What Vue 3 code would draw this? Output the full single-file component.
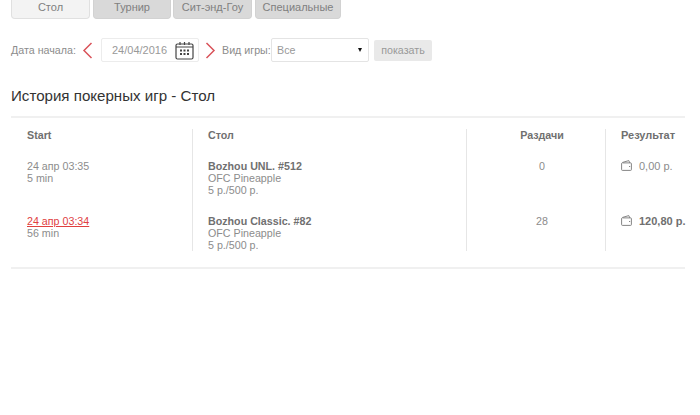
<script setup>
const tabs = [
  { name: 'Стол', active: true },
  { name: 'Турнир' },
  { name: 'Сит-энд-Гоу' },
  { name: 'Специальные' }
]
const rows = [
  { start: '24 апр 03:35', dur: '5 min', table: 'Bozhou UNL. #512', hands: '0', result: '0,00 р.' },
  { start: '24 апр 03:34', dur: '56 min', table: 'Bozhou Classic. #82', hands: '28', result: '120,80 р.', win: true }
]
</script>

<template>
  <div class="page">
    <nav class="tabs">
      <div v-for="t in tabs" :key="t.name" class="tab" :class="{ active: t.active }">{{ t.name }}</div>
    </nav>

    <div class="filters">
      <span class="label">Дата начала:</span>
      <svg class="arrow" width="11" height="17" viewBox="0 0 11 17"><path d="M9.500 1 L2 8.500 L9.500 16" fill="none" stroke="#d9535a" stroke-width="1.500"/></svg>
      <div class="date">
        <span>24/04/2016</span>
        <svg width="19" height="19" viewBox="0 0 19 19" class="cal">
          <rect x="1" y="3" width="17" height="15" rx="1.500" fill="none" stroke="#444" stroke-width="1.200"/>
          <path d="M1 6h17" stroke="#444" stroke-width="1"/>
          <path d="M5 1v3M9.500 1v3M14 1v3" stroke="#444" stroke-width="1.200"/>
          <path d="M5 8.500h2v2h-2zM8.500 8.500h2v2h-2zM12 8.500h2v2h-2zM5 12h2v2h-2zM8.500 12h2v2h-2zM12 12h2v2h-2z" fill="#444"/>
        </svg>
      </div>
      <svg class="arrow next" width="11" height="17" viewBox="0 0 11 17"><path d="M1.500 1 L9 8.500 L1.500 16" fill="none" stroke="#d9535a" stroke-width="1.500"/></svg>
      <span class="label game">Вид игры:</span>
      <div class="select"><span>Все</span><i class="caret"></i></div>
      <div class="show">показать</div>
    </div>

    <h1 class="title">История покерных игр - Стол</h1>

    <section class="history">
      <div class="col col-start">
        <div class="head">Start</div>
        <div v-for="r in rows" :key="r.start" class="cell">
          <a v-if="r.win" class="link">{{ r.start }}</a>
          <div v-else>{{ r.start }}</div>
          <div>{{ r.dur }}</div>
        </div>
      </div>
      <div class="col col-table">
        <div class="head">Стол</div>
        <div v-for="r in rows" :key="r.table" class="cell">
          <b>{{ r.table }}</b>
          <div>OFC Pineapple</div>
          <div>5 р./500 р.</div>
        </div>
      </div>
      <div class="col col-hands">
        <div class="head">Раздачи</div>
        <div v-for="r in rows" :key="r.table" class="cell">{{ r.hands }}</div>
      </div>
      <div class="col col-result">
        <div class="head">Результат</div>
        <div v-for="r in rows" :key="r.table" class="cell res" :class="{ win: r.win }">
          <svg width="11" height="11" viewBox="0 0 11 11"><path d="M.6 3.800 Q.6 2.900 1.600 2.400 L7.800 .6 L8.800 2.900 M1.600 2.900 H9.600 Q10.400 2.900 10.400 3.700 V9.600 Q10.400 10.400 9.600 10.400 H1.400 Q.6 10.400 .6 9.600 V3.800 M8 6.500 H9.200" fill="none" stroke="#777" stroke-width=".9"/></svg>
          <span>{{ r.result }}</span>
        </div>
      </div>
    </section>
  </div>
</template>

<style>
body { margin: 0; background: #fff; }
</style>

<style scoped>
.page {
  width: 700px;
  height: 415px;
  overflow: hidden;
  font-family: "Liberation Sans", Arial, sans-serif;
  font-size: 10.700px;
  line-height: 12px;
  color: #8c8c8c;
  background: #fff;
}
.tabs {
  display: flex;
  gap: 2px;
  padding-left: 11px;
  height: 19px;
}
.tab {
  width: 78px;
  height: 19px;
  box-sizing: border-box;
  padding-top: 1px;
  text-align: center;
  background: #d9d9d9;
  border: 1px solid #d2d2d2;
  border-top: 0;
  border-radius: 0 0 4px 4px;
  color: #808080;
  font-size: 11px;
  line-height: 12px;
}
.tab.active { background: #f3f3f3; border-color: #e0e0e0; width: 79px; margin-right: 1px; }
.tab:nth-child(3) { width: 79px; margin-right: 1px; }
.tab:nth-child(4) { width: 86px; }
.filters {
  display: flex;
  align-items: center;
  height: 24px;
  margin-top: 19px;
  padding-left: 11px;
}
.label { width: 66px; white-space: nowrap; }
.arrow { margin-left: 5px; }
.date {
  margin-left: 8px;
  width: 98px;
  height: 24px;
  box-sizing: border-box;
  border: 1px solid #ececec;
  border-radius: 2px;
  display: flex;
  align-items: center;
  padding-left: 10px;
  color: #999;
  font-size: 11px;
}
.cal { margin-left: 8px; }
.next { margin-left: 6px; }
.game { margin-left: 6px; width: 49px; }
.select {
  width: 98px;
  height: 24px;
  box-sizing: border-box;
  border: 1px solid #e4e4e4;
  border-radius: 2px;
  display: flex;
  align-items: center;
  justify-content: space-between;
  padding: 0 6px 0 5px;
  color: #999;
}
.caret {
  width: 0;
  height: 0;
  border-left: 2.500px solid transparent;
  border-right: 2.500px solid transparent;
  border-top: 4px solid #111;
}
.show {
  margin-left: 5px;
  width: 58px;
  height: 21px;
  background: #e9e9e9;
  border-radius: 2px;
  text-align: center;
  line-height: 21px;
  color: #999;
}
.title {
  margin: 24px 0 0 11px;
  font-weight: 400;
  font-size: 15.100px;
  line-height: 19px;
  color: #333;
}
.history {
  margin: 11px 15px 0 11px;
  height: 153px;
  box-sizing: border-box;
  border-top: 2px solid #f0f0f0;
  border-bottom: 2px solid #f0f0f0;
  padding-top: 11px;
  display: grid;
  grid-template-columns: 181px 274px 139px 80px;
  align-items: start;
}
.col { height: 122px; box-sizing: border-box; }
.col + .col { border-left: 1px solid #e6e6e6; }
.head { height: 25px; box-sizing: border-box; font-weight: 700; color: #707070; }
.cell { height: 55px; padding-top: 6px; box-sizing: border-box; }
.col-start { padding-left: 16px; }
.col-table { padding-left: 15px; }
.col-table b { color: #707070; display: block; }
.col-hands { text-align: center; padding-left: 12px; }
.col-result { padding-left: 15px; white-space: nowrap; font-size: 11px; }
.link { display: block; color: #e0403f; text-decoration: underline; }
.res { display: flex; align-items: flex-start; gap: 7px; }
.res svg { flex: none; margin-top: 0; }
.res.win span { font-weight: 700; color: #707070; }
</style>
